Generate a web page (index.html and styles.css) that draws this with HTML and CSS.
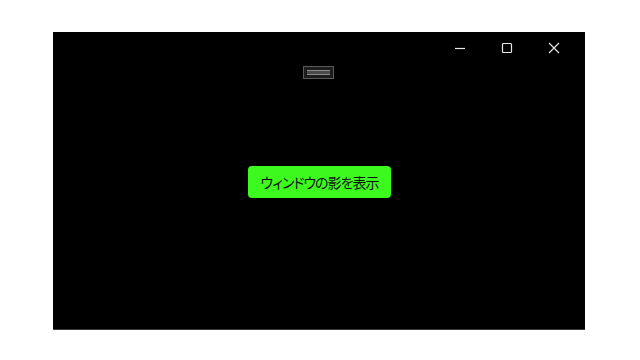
FILE: index.html
```html
<!DOCTYPE html>
<html lang="ja">
<head>
<meta charset="utf-8">
<link rel="stylesheet" href="styles.css">
</head>
<body>
<div class="window">
  <div class="titlebar">
    <div class="drag">
      <div class="grip"><div class="grip-bar"></div></div>
    </div>
    <div class="controls">
      <div class="ctl">
        <svg width="12" height="12" viewBox="0 0 12 12"><path d="M1 6.5H11" stroke="#e6e6e6" stroke-width="1.2"/></svg>
      </div>
      <div class="ctl">
        <svg width="12" height="12" viewBox="0 0 12 12"><rect x="1.5" y="1.5" width="9" height="9" rx="1" fill="none" stroke="#e6e6e6" stroke-width="1.2"/></svg>
      </div>
      <div class="ctl">
        <svg width="12" height="12" viewBox="0 0 12 12"><path d="M1 1L11 11M11 1L1 11" stroke="#e6e6e6" stroke-width="1.2"/></svg>
      </div>
    </div>
  </div>
  <div class="content">
    <button class="btn">ウィンドウの影を表示</button>
  </div>
</div>
</body>
</html>
```
FILE: styles.css
```css
html, body {
  margin: 0;
  padding: 0;
  background: #ffffff;
  width: 640px;
  height: 360px;
  overflow: hidden;
}
body {
  padding-top: 32px;
  padding-left: 53px;
  box-sizing: border-box;
}
.window {
  width: 532px;
  height: 298px;
  background: #000000;
  display: flex;
  flex-direction: column;
  border-bottom: 1px solid #3a3a3a;
  box-sizing: border-box;
}
.titlebar {
  height: 31px;
  display: flex;
  position: relative;
}
.drag {
  flex: 1;
}
.grip {
  position: absolute;
  left: 250px;
  top: 34px;
  width: 31px;
  height: 13px;
  box-sizing: border-box;
  border: 1px solid #5a5a5a;
  background: #1c1c1c;
  display: flex;
  align-items: center;
  justify-content: center;
}
.grip-bar {
  width: 23px;
  height: 5px;
  box-sizing: border-box;
  border-top: 1px solid #8a8a8a;
  border-bottom: 1px solid #8a8a8a;
  background: #4a4a4a;
}
.controls {
  display: flex;
  padding-right: 8px;
}
.ctl {
  width: 47px;
  height: 31px;
  display: flex;
  align-items: center;
  justify-content: center;
}
.content {
  flex: 1;
  display: flex;
  align-items: center;
  justify-content: center;
  padding-bottom: 29px;
  padding-left: 1px;
}
.btn {
  width: 143px;
  height: 32px;
  border: none;
  border-radius: 4px;
  background: #3cfa1e;
  color: #111111;
  font-family: "Noto Sans CJK JP", "Noto Sans", sans-serif;
  font-size: 14px;
  font-feature-settings: "palt" 1;
  letter-spacing: -1px;
  padding: 0;
  margin: 0;
}
```
